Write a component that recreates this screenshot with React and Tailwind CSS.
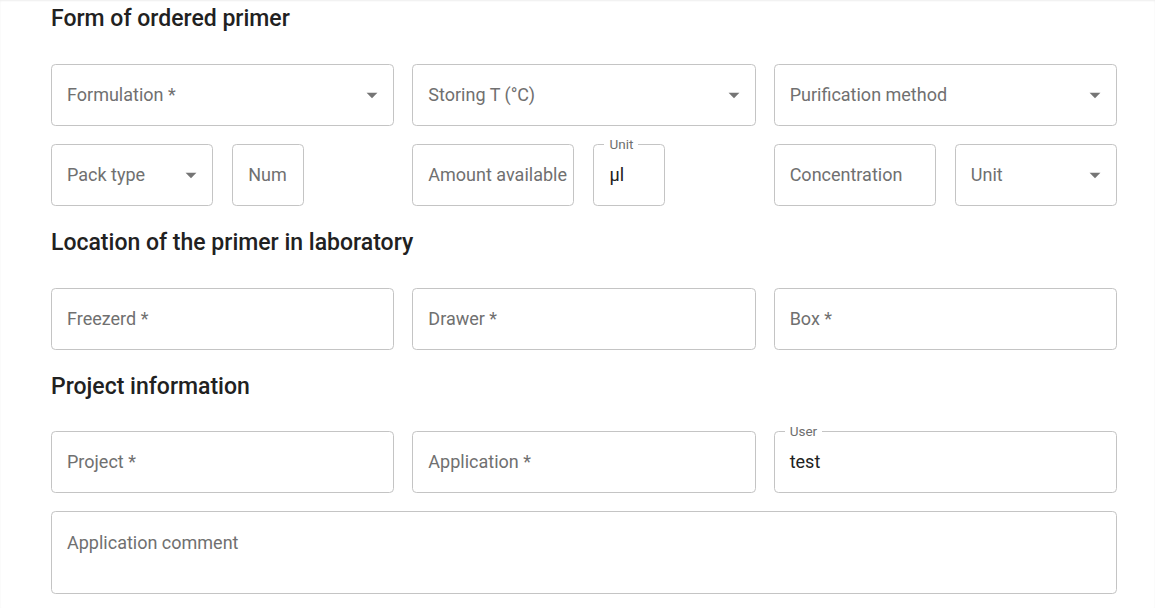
import React from "react";

function Arrow() {
  return (
    <svg width="26" height="26" viewBox="0 0 24 24" className="absolute right-[8px] top-[17px]" fill="#757575">
      <path d="M7 10l5 5 5-5z" />
    </svg>
  );
}

function Field({ label, select, value, floating, className = "", tall }) {
  return (
    <div
      className={
        "relative rounded-[4.4px] border border-[#c4c4c4] bg-white " +
        (tall ? "h-[83px] " : "h-[62px] ") +
        className
      }
    >
      {floating && (
        <span className="absolute left-[10px] top-0 -translate-y-1/2 bg-white px-[5px] text-[13.5px] leading-none text-[#6e6e6e]">
          {floating}
        </span>
      )}
      <div
        className={
          "absolute left-[15px] text-[18px] leading-[25px] whitespace-nowrap " +
          (tall ? "top-[18px] " : "top-[17px] ") +
          (value ? "text-[#212121]" : "text-[#707070]")
        }
      >
        {value || label}
      </div>
      {select && <Arrow />}
    </div>
  );
}

function Heading({ children, className = "" }) {
  return (
    <h2 className={"text-[23px] font-medium text-[#212121] " + className}>{children}</h2>
  );
}

export default function App() {
  return (
    <div
      className="w-[1155px] h-[608px] overflow-hidden bg-white shadow-[inset_0_1px_2px_rgba(0,0,0,0.07)]"
      style={{ fontFamily: "Roboto, 'Noto Sans', sans-serif" }}
    >
      <div className="ml-[51px] w-[1066px]">
        <Heading className="leading-[37px]">Form of ordered primer</Heading>
        <div className="mt-[27px] grid grid-cols-3 gap-x-[18px] gap-y-[18px]">
          <Field label="Formulation *" select />
          <Field label="Storing T (°C)" select />
          <Field label="Purification method" select />
          <div className="grid grid-cols-2 gap-x-[19px]">
            <Field label="Pack type" select />
            <Field label="Num" className="w-[72px]" />
          </div>
          <div className="grid grid-cols-2 gap-x-[19px]">
            <Field label="Amount available" />
            <Field floating="Unit" value="μl" className="w-[72px]" />
          </div>
          <div className="grid grid-cols-2 gap-x-[19px]">
            <Field label="Concentration" />
            <Field label="Unit" select />
          </div>
        </div>

        <Heading className="mt-[20px] leading-[33px]">Location of the primer in laboratory</Heading>
        <div className="mt-[29px] grid grid-cols-3 gap-x-[18px]">
          <Field label="Freezerd *" />
          <Field label="Drawer *" />
          <Field label="Box *" />
        </div>

        <Heading className="mt-[20px] leading-[33px]">Project information</Heading>
        <div className="mt-[28px] grid grid-cols-3 gap-x-[18px] gap-y-[18px]">
          <Field label="Project *" />
          <Field label="Application *" />
          <Field floating="User" value="test" />
          <Field label="Application comment" tall className="col-span-3" />
        </div>
      </div>
    </div>
  );
}
